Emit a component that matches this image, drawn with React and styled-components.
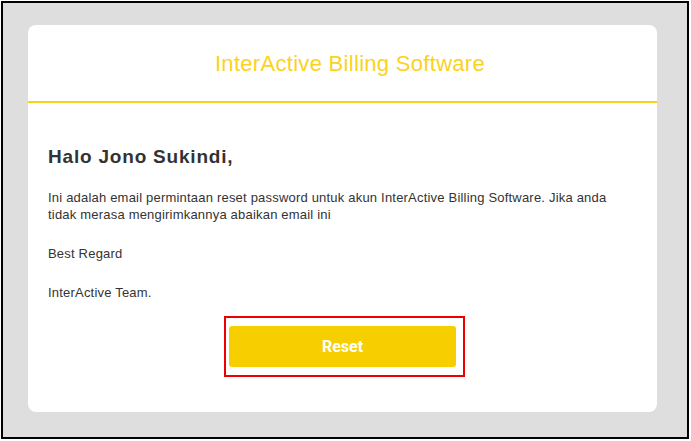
import React from "react";
import styled, { createGlobalStyle } from "styled-components";

const Global = createGlobalStyle`
  html, body { margin: 0; padding: 0; background: #ffffff; }
  body { font-family: "Liberation Sans", Arial, sans-serif; }
`;

const Frame = styled.div`
  margin: 1px;
  box-sizing: border-box;
  width: 688px;
  height: 438px;
  border: 2px solid #000;
  background: #dedede;
  padding: 22px 30px 25px 25px;
`;

const Card = styled.div`
  background: #fff;
  border-radius: 8px;
  height: 387px;
  display: flex;
  flex-direction: column;
`;

const Header = styled.div`
  box-sizing: border-box;
  height: 78px;
  border-bottom: 2px solid #fcd116;
  display: flex;
  align-items: center;
  justify-content: center;
  padding: 2px 0 0 15px;
`;

const Title = styled.h1`
  margin: 0;
  font-size: 22px;
  font-weight: normal;
  color: #fcd21c;
  letter-spacing: 0.3px;
`;

const Body = styled.div`
  padding: 43px 20px 0 20px;
  display: flex;
  flex-direction: column;
`;

const Greeting = styled.h2`
  margin: 0 0 21px 0;
  font-size: 19px;
  font-weight: bold;
  color: #333;
  letter-spacing: 0.8px;
  line-height: 22px;
`;

const Para = styled.p`
  margin: 0 0 22px 0;
  font-size: 13px;
  line-height: 17px;
  color: #333;
  letter-spacing: 0.2px;
`;

const Highlight = styled.div`
  align-self: center;
  margin: -7px 0 0 4px;
  border: 2px solid #ee0000;
  padding: 8px 7px 8px 3px;
  display: flex;
`;

const Button = styled.button`
  width: 227px;
  height: 41px;
  border: none;
  border-radius: 3px;
  background: #f7cf00;
  color: #fff;
  font-family: Roboto, "Liberation Sans", Arial, sans-serif;
  font-weight: bold;
  font-size: 16px;
  cursor: pointer;
`;

export default function App() {
  return (
    <>
      <Global />
      <Frame>
        <Card>
          <Header>
            <Title>InterActive Billing Software</Title>
          </Header>
          <Body>
            <Greeting>Halo Jono Sukindi,</Greeting>
            <Para>
              Ini adalah email permintaan reset password untuk akun InterActive Billing Software. Jika anda
              <br />
              tidak merasa mengirimkannya abaikan email ini
            </Para>
            <Para>Best Regard</Para>
            <Para>InterActive Team.</Para>
            <Highlight>
              <Button>Reset</Button>
            </Highlight>
          </Body>
        </Card>
      </Frame>
    </>
  );
}
